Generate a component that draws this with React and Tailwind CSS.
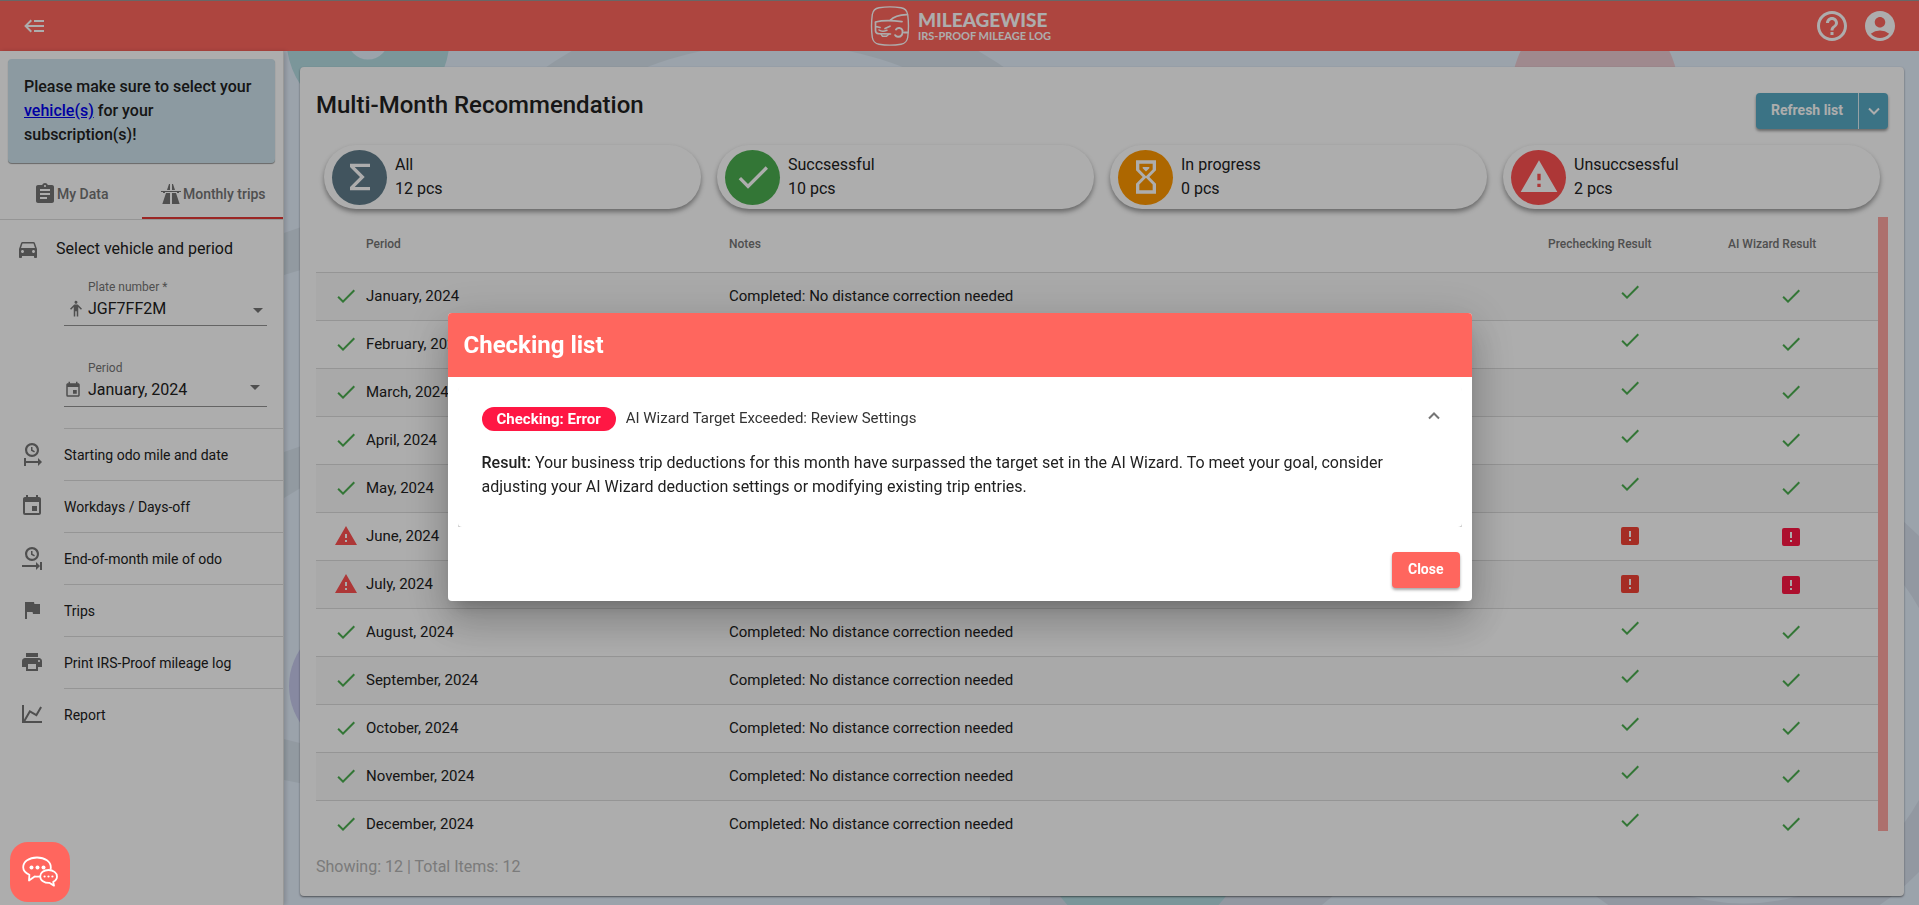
import React from 'react';
import {
    MdAccountCircle,
    MdAssignment,
    MdCheck,
    MdDirectionsCar,
    MdEvent,
    MdFlag,
    MdHelpOutline,
    MdPrint,
    MdWarning,
} from 'react-icons/md';

const PATHS = {
    backburger: 'M5,13L9,17L7.6,18.42L1.18,12L7.6,5.58L9,7L5,11H21V13H5M21,6V8H11V6H21M21,16V18H11V16H21Z',
    highway: 'M10,2L8,8H11V2H10M13,2V8H16L14,2H13M2,9V10H4V11H6V10H18L18.06,11H20V10H22V9H2M7,11L3.34,22H11V11H7M13,11V22H20.66L17,11H13Z',
    human: 'M12,1C10.89,1 10,1.9 10,3C10,4.11 10.89,5 12,5C13.11,5 14,4.11 14,3A2,2 0 0,0 12,1M10,6C9.73,6 9.5,6.11 9.31,6.28H9.3L4,11.59L5.42,13L9,9.41V22H11V15H13V22H15V9.41L18.58,13L20,11.58L14.7,6.28C14.5,6.11 14.27,6 14,6H10Z',
    clockStart: 'M12,1C8.14,1 5,4.14 5,8A7,7 0 0,0 12,15C15.86,15 19,11.87 19,8C19,4.14 15.86,1 12,1M12,3.15C14.67,3.15 16.85,5.32 16.85,8C16.85,10.68 14.67,12.85 12,12.85A4.85,4.85 0 0,1 7.15,8A4.85,4.85 0 0,1 12,3.15M11,5V8.69L14.19,10.53L14.94,9.23L12.5,7.82V5M4,16V24H6V21H18V24L22,20L18,16V19H6V16H4Z',
    clockEnd: 'M12,1C8.14,1 5,4.14 5,8A7,7 0 0,0 12,15C15.86,15 19,11.87 19,8C19,4.14 15.86,1 12,1M12,3.15C14.67,3.15 16.85,5.32 16.85,8C16.85,10.68 14.67,12.85 12,12.85A4.85,4.85 0 0,1 7.15,8A4.85,4.85 0 0,1 12,3.15M11,5V8.69L14.19,10.53L14.94,9.23L12.5,7.82V5M16,16V19H2V21H16V24L20,20L16,16M20,16V24H22V16H20Z',
    chart: 'M16,11.78L20.24,4.45L21.97,5.45L16.74,14.5L10.23,10.75L5.46,19H22V21H2V3H4V17.54L9.5,8L16,11.78Z',
    sigma: 'M18,6H8.83L14.83,12L8.83,18H18V20H6V18L12,12L6,6V4H18V6Z',
    hourglass: 'M6,2H18V8L14,12L18,16V22H6V16L10,12L6,8V2M16,16.5L12,12.5L8,16.5V20H16V16.5M12,11.5L16,7.5V4H8V7.5L12,11.5M10,6H14V6.75L12,8.75L10,6.75V6Z',
    alertBox: 'M5,3H19A2,2 0 0,1 21,5V19A2,2 0 0,1 19,21H5A2,2 0 0,1 3,19V5A2,2 0 0,1 5,3M13,13V7H11V13H13M13,17V15H11V17H13Z',
};

const Icon = ({ name, className }) => (
    <svg viewBox="0 0 24 24" fill="currentColor" fillRule="evenodd" aria-hidden="true" className={className}>
        <path d={PATHS[name]} />
    </svg>
);

const MENU = [
    { label: 'Starting odo mile and date', icon: <Icon name="clockStart" className="size-6" /> },
    { label: 'Workdays / Days-off', icon: <MdEvent className="size-6" /> },
    { label: 'End-of-month mile of odo', icon: <Icon name="clockEnd" className="size-6" /> },
    { label: 'Trips', icon: <MdFlag className="size-6" /> },
    { label: 'Print IRS-Proof mileage log', icon: <MdPrint className="size-6" /> },
    { label: 'Report', icon: <Icon name="chart" className="size-6" /> },
];

const STATS = [
    { label: 'All', count: 12, color: 'bg-[#607d8b]', icon: <Icon name="sigma" className="size-10" /> },
    { label: 'Succsessful', count: 10, color: 'bg-[#4caf50]', icon: <MdCheck className="size-10" /> },
    { label: 'In progress', count: 0, color: 'bg-[#ff9800]', icon: <Icon name="hourglass" className="size-10" /> },
    { label: 'Unsuccsessful', count: 2, color: 'bg-[#ff5252]', icon: <MdWarning className="size-10" /> },
];

const MONTHS = [
    'January', 'February', 'March', 'April', 'May', 'June',
    'July', 'August', 'September', 'October', 'November', 'December',
];
const FAILED = ['June', 'July'];

const Logo = () => (
    <div className="flex items-center gap-2 text-white">
        <svg viewBox="0 0 40 40" fill="none" stroke="currentColor" strokeLinecap="round" className="size-10" aria-hidden="true">
            <path d="M9 1.8C16 .6 24 .6 31 1.8c4 .7 6 2.700 6.700 6.700 1 7.500 1 15.500 0 23-.7 4-2.700 6-6.700 6.700-7 1.200-15 1.200-22 0-4-.7-6-2.700-6.700-6.700-1-7.500-1-15.500 0-23C3 4.500 5 2.500 9 1.800z" strokeWidth="1.400" />
            <path d="M5.500 16c7-1.800 14-2 26.500-.4M20 14.500c4-4 9-5.500 16.500-5.800" strokeWidth="1.700" />
            <path d="M5.500 16.500v8c0 2 1 3 3 3.200l12 .3M6 20.500l4 1M15 22.500l5-2.300" strokeWidth="1.700" />
            <path d="M9 24c2 1.500 5 1.500 8 .3M11 28l1.500 2.300h4L19 28" strokeWidth="1.500" />
            <path d="M26 23.500c1.500-2.300 5.500-2.200 6.500 1 .8 3.500-1.500 6.500-4.500 6.300-1.300 0-2.200-.6-2.800-1.600M34.500 26.500h3" strokeWidth="2" />
        </svg>
        <div className="flex flex-col font-['Lato','Open_Sans',sans-serif]">
            <span className="text-[19px] leading-5 font-black">MILEAGEWISE</span>
            <span className="text-[11px] leading-3 font-bold">IRS-PROOF MILEAGE LOG</span>
        </div>
    </div>
);

const Header = () => (
    <header className="grid h-[51px] shrink-0 grid-cols-3 items-center border-t border-[#999] bg-[#ff665e] pr-[21px] pl-[23px] text-white">
        <button type="button" aria-label="Toggle menu" className="w-fit">
            <Icon name="backburger" className="size-6" />
        </button>
        <div className="flex justify-center">
            <Logo />
        </div>
        <div className="flex justify-end gap-3">
            <button type="button" aria-label="Help"><MdHelpOutline className="size-9" /></button>
            <button type="button" aria-label="Account"><MdAccountCircle className="size-9" /></button>
        </div>
    </header>
);

const SelectField = ({ id, label, value, icon, arrow }) => (
    <div className="relative border-b border-[#949494] pb-1">
        <label htmlFor={id} className="block pl-6 text-xs leading-5 text-[#757575]">{label}</label>
        <div className="flex items-center">
            <span className="flex w-6 shrink-0 text-[#757575]">{icon}</span>
            <select id={id} defaultValue={value} className="h-6 flex-1 appearance-none bg-transparent text-base leading-6 outline-none">
                <option>{value}</option>
            </select>
        </div>
        <span className={`pointer-events-none absolute border-x-5 border-t-5 border-x-transparent border-t-[#757575] ${arrow}`}></span>
    </div>
);

const Sidebar = () => (
    <aside className="z-10 flex w-[284px] shrink-0 flex-col border-r border-[#e0e0e0] bg-white shadow-[2px_0_4px_rgba(0,0,0,0.15)]">
        <div className="m-2 rounded bg-[#cee4ed] p-4 text-base leading-6 font-medium shadow-[0_1px_1px_rgba(0,0,0,0.4)]">
            Please make sure to select your <a href="#vehicles" className="text-[#0000ee] underline">vehicle(s)</a> for your subscription(s)!
        </div>
        <div className="flex h-[49px] border-b border-[#dcdcdc] text-sm font-medium text-[#757575]">
            <button type="button" className="flex flex-1 items-center justify-center pb-0.5">
                <MdAssignment className="size-6" />
                My Data
            </button>
            <button type="button" className="flex flex-1 items-center justify-center border-b-2 border-[#e53935]">
                <Icon name="highway" className="size-6" />
                Monthly trips
            </button>
        </div>
        <div className="flex h-[57px] items-center gap-4 px-4">
            <MdDirectionsCar className="size-6 text-[#757575]" />
            <span className="text-base">Select vehicle and period</span>
        </div>
        <div className="mr-4 ml-16 flex flex-col gap-8 pb-[21px]">
            <SelectField
                id="plate"
                label="Plate number *"
                value="JGF7FF2M"
                icon={<Icon name="human" className="ml-[3px] size-[18px]" />}
                arrow="right-1 bottom-3"
            />
            <SelectField
                id="period"
                label="Period"
                value="January, 2024"
                icon={<MdEvent className="size-[18px]" />}
                arrow="right-[7px] bottom-4"
            />
        </div>
        <nav className="flex flex-col">
            {MENU.map((item) => (
                <a key={item.label} href="#menu" className="flex h-[52px] items-center gap-5 pl-5 text-sm">
                    <span className="text-[#757575]">{item.icon}</span>
                    <span className="flex h-full flex-1 items-center border-t border-[#dcdcdc]">{item.label}</span>
                </a>
            ))}
        </nav>
    </aside>
);

const Backdrop = () => (
    <svg viewBox="284 51 1635 854" preserveAspectRatio="xMidYMid slice" className="absolute inset-0 size-full" aria-hidden="true">
        <rect x="284" y="51" width="1635" height="854" fill="#e5f0fd" />
        <circle cx="775" cy="403" r="383" fill="none" stroke="#d8e4ee" strokeWidth="47" />
        <path d="M284 233l20-7v43l-20 6zM284 452l20-7v41l-20 12zM284 739l20 5v40l-20-4z" fill="#d8e4ee" />
        <circle cx="368" cy="39" r="51" fill="none" stroke="#b5dee4" strokeWidth="61" />
        <circle cx="355" cy="686" r="66" fill="#c8cbee" />
        <circle cx="1595" cy="88" r="52" fill="none" stroke="#ebcbd2" strokeWidth="62" />
        <path d="M990 890h350l-18 15H990z" fill="#d8e1ee" />
        <circle cx="1143" cy="835" r="103" fill="#b5dee4" />
        <circle cx="1744" cy="704" r="221" fill="none" stroke="#d8e1ee" strokeWidth="43" />
    </svg>
);

const StatCard = ({ label, count, color, icon }) => (
    <div className="flex h-16 flex-1 items-center gap-2 rounded-full bg-white px-2 shadow-[0_3px_5px_rgba(0,0,0,0.4)]">
        <span className={`flex size-[55px] items-center justify-center rounded-full text-white ${color}`}>{icon}</span>
        <div className="text-base leading-6">
            <div>{label}</div>
            <div>{count} pcs</div>
        </div>
    </div>
);

const ResultTable = () => (
    <div className="flex h-[614px] overflow-hidden">
        <div className="flex-1 overflow-hidden">
            <table className="w-full table-fixed border-collapse text-left text-[15px]">
                <colgroup>
                    <col className="w-[50px]" />
                    <col className="w-[363px]" />
                    <col />
                    <col className="w-[180px]" />
                    <col className="w-[150px]" />
                </colgroup>
                <thead>
                    <tr className="h-[55px] text-xs text-[#757575]">
                        <th></th>
                        <th className="font-medium">Period</th>
                        <th className="font-medium">Notes</th>
                        <th className="font-medium">Prechecking Result</th>
                        <th className="font-medium">AI Wizard Result</th>
                    </tr>
                </thead>
                <tbody>
                    {MONTHS.map((month) => {
                        const failed = FAILED.includes(month);
                        return (
                            <tr key={month} className="h-12 border-t border-[#dcdcdc] odd:bg-[#f9f9f9]">
                                <td className="pl-[18px]">
                                    {failed ? <MdWarning className="size-6 text-[#ff5252]" /> : <MdCheck className="size-6 text-[#4caf50]" />}
                                </td>
                                <td>{month}, 2024</td>
                                <td>{failed ? '' : 'Completed: No distance correction needed'}</td>
                                <td className="pl-[70px]">
                                    {failed
                                        ? <Icon name="alertBox" className="size-6 text-[#f44336]" />
                                        : <MdCheck className="mb-2 size-6 text-[#4caf50]" />}
                                </td>
                                <td className="pl-[51px]">
                                    {failed
                                        ? <Icon name="alertBox" className="mt-0.5 size-6 text-[#ff1744]" />
                                        : <MdCheck className="size-6 text-[#4caf50]" />}
                                </td>
                            </tr>
                        );
                    })}
                </tbody>
            </table>
        </div>
        <div className="w-[10px] bg-[#ffa5a1]"></div>
    </div>
);

const CheckingDialog = () => (
    <div className="fixed inset-0 z-20 flex items-center justify-center bg-black/32 pt-2">
        <div
            role="dialog"
            aria-labelledby="dialog-title"
            className="w-full max-w-5xl overflow-hidden rounded bg-white shadow-[0_11px_15px_-7px_rgba(0,0,0,0.2),0_24px_38px_3px_rgba(0,0,0,0.14),0_9px_46px_8px_rgba(0,0,0,0.12)]"
        >
            <h2 id="dialog-title" className="flex h-16 items-center bg-[#ff665e] px-4 text-2xl font-bold text-white">Checking list</h2>
            <div className="m-[10px] overflow-hidden">
                <section className="h-[140px] rounded pt-5 pr-[22px] pl-6 shadow-[0_2px_2px_rgba(0,0,0,0.3)]">
                    <button type="button" className="flex w-full items-center text-left text-[15px]">
                        <span className="rounded-full bg-[#ff1744] px-[15px] leading-6 font-bold text-white">Checking: Error</span>
                        <span className="flex-1 pl-[10px] text-[#333]">AI Wizard Target Exceeded: Review Settings</span>
                        <svg viewBox="0 0 12 8" fill="none" stroke="#757575" strokeWidth="2" className="mb-1.5 h-2 w-3" aria-hidden="true">
                            <path d="M1 6.500l5-5 5 5" />
                        </svg>
                    </button>
                    <p className="mt-5 text-base leading-6 text-[#212121]">
                        <strong className="font-medium">Result:</strong> Your business trip deductions for this month have surpassed the target set in the AI Wizard. To meet your goal, consider adjusting your AI Wizard deduction settings or modifying existing trip entries.
                    </p>
                </section>
            </div>
            <div className="flex justify-end pt-[15px] pr-3 pb-[13px]">
                <button type="button" className="h-9 rounded bg-[#ff665e] px-4 pb-0.5 text-sm font-bold text-white shadow-[0_2px_3px_rgba(0,0,0,0.35)]">Close</button>
            </div>
        </div>
    </div>
);

const ChatButton = () => (
    <button type="button" aria-label="Chat" className="fixed bottom-[3px] left-[10px] z-30 flex size-[60px] items-center justify-center rounded-[18px] bg-[#ff665e] text-white">
        <svg viewBox="0 0 36 32" fill="none" stroke="currentColor" strokeWidth="1.800" strokeLinejoin="round" className="h-8 w-9" aria-hidden="true">
            <path d="M18 20.300c-1.500.4-3.600.5-5.300.2L7 24.500l.4-5.700C3.500 17 1.200 14.500 1.200 11.200 1.200 5.600 7 1.500 15 1.500s13.800 4.300 13.800 9.800c0 .8-.1 1.600-.4 2.300" />
            <path d="M26.500 14c4.800 0 8.500 2.800 8.500 6.400 0 2.300-1.400 4.200-3.800 5.300l.8 4-4.300-2.800c-5.300.3-9.500-2.600-9.500-6.500S21.800 14 26.500 14z" />
            <g fill="currentColor" stroke="none">
                <circle cx="9.500" cy="11.500" r="2" />
                <circle cx="15.500" cy="11.500" r="2" />
                <circle cx="21.500" cy="11.500" r="2" />
                <circle cx="22.600" cy="20.500" r="1.100" />
                <circle cx="26.500" cy="20.500" r="1.100" />
                <circle cx="30.400" cy="20.500" r="1.100" />
            </g>
        </svg>
    </button>
);

export default function App() {
    return (
        <div className="flex h-screen flex-col overflow-hidden font-['Roboto',sans-serif] text-[#212121]">
            <Header />
            <div className="flex min-h-0 flex-1">
                <Sidebar />
                <main className="relative flex flex-1 flex-col pt-4 pr-[15px] pb-[9px] pl-4">
                    <Backdrop />
                    <div className="relative flex flex-1 flex-col rounded bg-white px-4 shadow-[0_1px_2px_rgba(0,0,0,0.5)]">
                        <div className="flex items-start justify-between pt-[26px]">
                            <h1 className="text-2xl leading-6 font-medium">Multi-Month Recommendation</h1>
                            <div className="flex h-9 rounded bg-[#58aac4] text-sm font-bold text-white shadow-[0_2px_3px_rgba(0,0,0,0.4)]">
                                <button type="button" className="border-r border-white/80 px-[15px] pb-0.5">Refresh list</button>
                                <button type="button" aria-label="More actions" className="flex w-[29px] items-center justify-center">
                                    <svg viewBox="0 0 12 8" fill="none" stroke="currentColor" strokeWidth="2" className="h-2 w-3" aria-hidden="true">
                                        <path d="M1 1.500l5 5 5-5" />
                                    </svg>
                                </button>
                            </div>
                        </div>
                        <div className="mt-4 mb-2 flex gap-4 px-2">
                            {STATS.map((stat) => <StatCard key={stat.label} {...stat} />)}
                        </div>
                        <ResultTable />
                        <div className="mt-6 text-base leading-6 text-[#b5b5b5]">Showing: 12 | Total Items: 12</div>
                    </div>
                </main>
            </div>
            <CheckingDialog />
            <ChatButton />
        </div>
    );
}
